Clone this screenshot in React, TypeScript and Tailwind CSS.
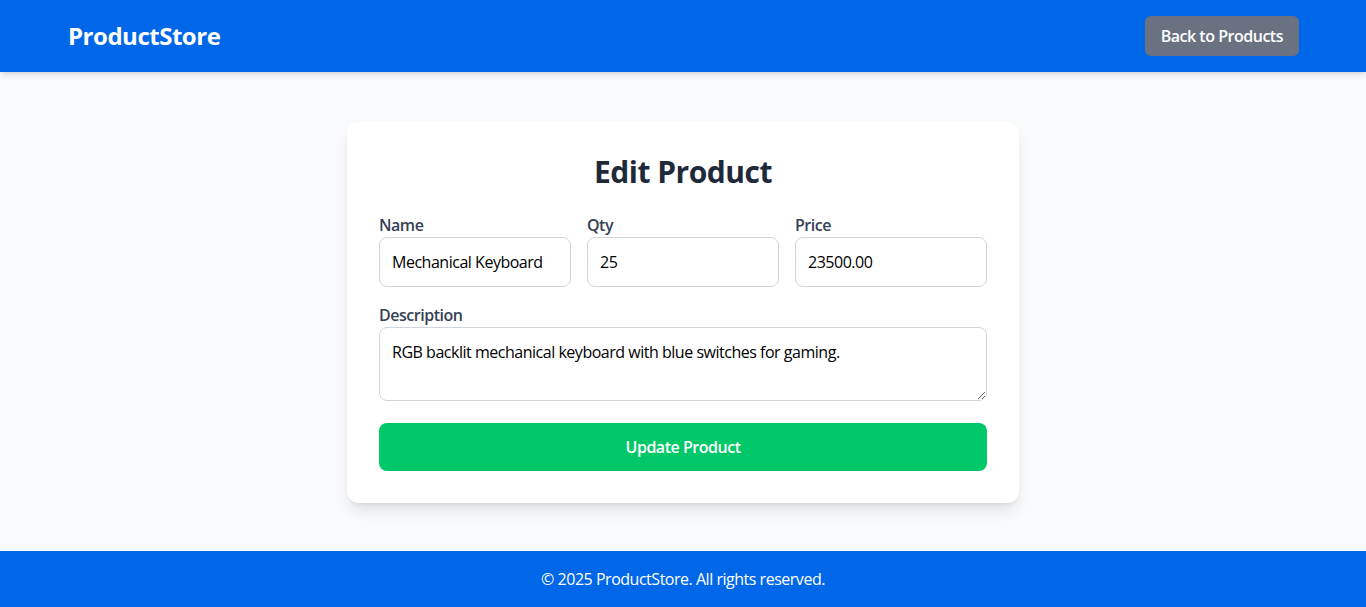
import React from 'react';

const fields = [
  { label: 'Name', value: 'Mechanical Keyboard', type: 'text' },
  { label: 'Qty', value: '25', type: 'number' },
  { label: 'Price', value: '23500.00', type: 'text' },
];

const App: React.FC = () => {
  return (
    <div className="flex min-h-screen flex-col bg-gray-50 font-['Open_Sans',sans-serif] tracking-[-0.03em] text-black">
      <header className="relative z-10 bg-[#0067e9] shadow-md">
        <div className="flex h-[72px] items-center justify-between pl-[68px] pr-[67px]">
          <h1 className="text-2xl font-bold text-white">ProductStore</h1>
          <a
            href="#"
            className="rounded-md bg-gray-500 px-4 py-2 text-base font-semibold text-white"
          >
            Back to Products
          </a>
        </div>
      </header>

      <main className="flex-1 px-4 pt-[50px] pb-12">
        <form className="mx-auto max-w-2xl rounded-xl bg-white p-8 shadow-lg">
          <h2 className="mb-[23px] text-center text-3xl font-bold text-gray-800">Edit Product</h2>

          <div className="mb-4 grid grid-cols-3 gap-4">
            {fields.map((f) => (
              <div key={f.label}>
                <label className="block text-base font-semibold text-gray-700">{f.label}</label>
                <input
                  type="text"
                  defaultValue={f.value}
                  className="block w-full rounded-lg border border-gray-300 px-3 py-3 text-base leading-6 text-black outline-none"
                />
              </div>
            ))}
          </div>

          <div>
            <label className="block text-base font-semibold text-gray-700">Description</label>
            <textarea
              rows={2}
              defaultValue="RGB backlit mechanical keyboard with blue switches for gaming."
              className="block w-full rounded-lg border border-gray-300 px-3 py-3 text-base leading-6 text-black outline-none"
            />
          </div>

          <button
            type="button"
            className="mt-[22px] w-full rounded-lg bg-[#00c868] py-3 text-base font-semibold text-white"
          >
            Update Product
          </button>
        </form>
      </main>

      <footer className="bg-[#0067e9] py-4 text-center text-base text-white">
        © 2025 ProductStore. All rights reserved.
      </footer>
    </div>
  );
};

export default App;
